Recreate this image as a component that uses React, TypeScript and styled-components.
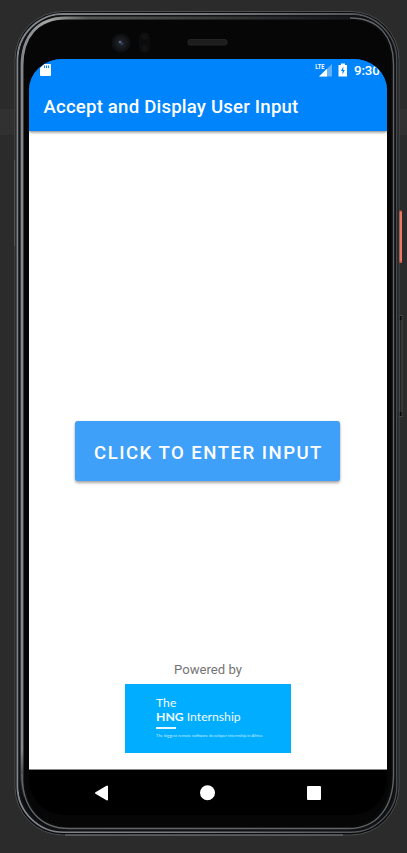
import React from "react";
import styled, { createGlobalStyle } from "styled-components";

const GlobalStyle = createGlobalStyle`
  * { box-sizing: border-box; }
  body { margin: 0; background: #2b2b2b; }
`;

const Desktop = styled.div`
  position: relative;
  width: 407px;
  height: 853px;
  padding: 11px 7px 17px 14px;
  overflow: hidden;
  background: linear-gradient(#2b2b2b 0 109px, #313131 109px 135px, #2b2b2b 135px);
`;

const Hardware = styled.svg`
  position: absolute;
  left: 0;
  top: 0;
`;

const Phone = styled.main`
  position: relative;
  display: flex;
  flex-direction: column;
  padding: 48px 6px 20px 15px;
  height: 825px;
  width: 379px;
`;

const Screen = styled.section`
  display: flex;
  flex-direction: column;
  width: 358px;
  height: 756px;
  overflow: hidden;
  border-radius: 34px 34px 36px 36px / 31px 31px 36px 36px;
  background: linear-gradient(#0084fb 0 72px, #fff 72px 711px, #000 711px);
  font-family: Roboto, sans-serif;
`;

const Header = styled.header`
  height: 72px;
  flex: none;
  background: #0084fb;
  color: #fff;
  box-shadow: 0 1px 3px rgba(0, 0, 0, 0.55);
`;

const StatusBar = styled.div`
  display: flex;
  align-items: center;
  height: 22px;
  padding: 0 7px 0 11px;
`;

const Spacer = styled.span`
  flex: 1;
`;

const Clock = styled.span`
  margin-left: 6px;
  width: 26px;
  font-size: 13.3px;
  font-weight: 500;
  line-height: 23px;
  letter-spacing: -0.15px;
  white-space: nowrap;
`;

const Title = styled.h1`
  margin: 0;
  padding: 14px 0 0 14.5px;
  font-size: 18.6px;
  line-height: 24px;
  font-weight: 500;
  letter-spacing: 0.2px;
  white-space: nowrap;
`;

const Content = styled.div`
  display: flex;
  flex: 1;
  flex-direction: column;
  align-items: center;
  padding-top: 290px;
`;

const InputButton = styled.button`
  width: 265px;
  height: 60px;
  margin-left: -1px;
  padding: 3px 0 0 2px;
  border: 0;
  border-radius: 3px;
  background: #3fa0fa;
  color: #fff;
  box-shadow: 0 2px 3px rgba(0, 0, 0, 0.35), 0 0 1px rgba(0, 0, 0, 0.2);
  font: 500 18.6px/24px Roboto, sans-serif;
  letter-spacing: 1.47px;
  white-space: nowrap;
`;

const Credit = styled.p`
  margin: 181px 0 0;
  color: #747474;
  font-size: 13.1px;
  line-height: 16px;
  white-space: nowrap;
`;

const Banner = styled.div`
  width: 166px;
  height: 69px;
  margin-top: 6px;
  padding: 12px 0 0 31px;
  background: #00adff;
  color: #f4fbff;
  font: 12.2px/14px Lato, sans-serif;
  white-space: nowrap;
`;

const Rule = styled.div`
  width: 20px;
  height: 1.5px;
  margin: 3px 0 4.5px;
  background: #e5f7ff;
`;

const Tagline = styled.div`
  color: #c9efff;
  font-size: 4.15px;
  line-height: 6px;
`;

const NavBar = styled.nav`
  display: flex;
  flex: none;
  height: 46px;
  margin-top: -1px;
  padding-left: 65px;
  gap: 90px;
  align-items: center;
  background: #000;
  border-top: 1px solid #888;
`;

function PhoneHardware() {
  return (
    <Hardware width="407" height="853" viewBox="0 0 407 853" fill="none">
      <defs>
        <linearGradient id="rim" x1="0" y1="0" x2="1" y2="0">
          <stop offset="0" stopColor="#83868a" />
          <stop offset=".5" stopColor="#77797b" />
          <stop offset="1" stopColor="#4b4d50" />
        </linearGradient>
        <linearGradient id="inner" x1="22" y1="0" x2="350" y2="0" gradientUnits="userSpaceOnUse">
          <stop offset="0" stopColor="#84868a" />
          <stop offset=".08" stopColor="#a5a7a5" />
          <stop offset=".2" stopColor="#555755" />
          <stop offset="1" stopColor="#17191b" />
        </linearGradient>
        <linearGradient id="leftFade" x1="0" y1="750" x2="0" y2="790" gradientUnits="userSpaceOnUse">
          <stop offset="0" stopColor="#84868a" />
          <stop offset="1" stopColor="#25272a" />
        </linearGradient>
        <radialGradient id="lens">
          <stop offset="0" stopColor="#292e42" />
          <stop offset=".4" stopColor="#181a20" />
          <stop offset="1" stopColor="#0c0d0f" />
        </radialGradient>
      </defs>
      <rect x="399" y="211" width="3" height="52" rx="1" fill="#ed7866" />
      <path d="M399 211h3M399 262h3" stroke="#c9422f" />
      <rect x="399.5" y="315.5" width="2.5" height="101" fill="#222426" stroke="#45474a" />
      <path d="M400.5 316v4M400.5 412v4" stroke="#08090a" strokeWidth="2" />
      <path d="M14.5 160v86" stroke="#56585a" />
      <rect x="15" y="11.5" width="384" height="823.5" rx="48" fill="#0a0b0c" stroke="#4c4e50" />
      <rect x="17.5" y="14" width="379" height="818" rx="46" stroke="url(#rim)" strokeWidth="2" />
      <rect x="19.8" y="16.3" width="375" height="814" rx="44" stroke="#101215" strokeWidth="2.5" />
      <path d="M22 750V66C22 37 37 18 66 18h284" stroke="url(#inner)" strokeWidth="2.8" />
      <path d="M20.6 750h2.8v30q0 8 2 16l-2 1q-2.8-9-2.8-17Z" fill="url(#leftFade)" />
      <path d="M350 18c29 0 43.5 19 43.5 46v710c0 33-16 54.5-45 54.5H69c-29 0-47-20-47-54.5" stroke="#626466" strokeWidth="1.4" />
      <path d="M65 835h278" stroke="#777" />
      <path d="M24 770V66c0-29 17-46 42-46h283c26 0 42 17 42 46v704c0 36-18 57-44 57H69c-27 0-45-21-45-57Z" fill="#060607" />
      <circle cx="121" cy="43" r="9.5" fill="url(#lens)" />
      <circle cx="121" cy="43" r="5" stroke="#1b1d21" />
      <circle cx="120" cy="42" r="1.3" fill="#606477" />
      <circle cx="122" cy="44" r="1" fill="#354575" />
      <rect x="140" y="33" width="9" height="19" rx="4" fill="#0a0b0c" stroke="#101112" />
      <circle cx="144.5" cy="37" r="3" fill="#111213" />
      <circle cx="144.5" cy="48" r="3" fill="#111213" />
      <rect x="188" y="39.5" width="39" height="5.5" rx="2" fill="#1d1d1e" stroke="#242425" />
    </Hardware>
  );
}

function StorageIcon() {
  return (
    <svg width="12" height="14" viewBox="0 0 12 14">
      <path fill="#fff" d="M4 1h6q1 0 1 1v10q0 1-1 1H1q-1 0-1-1V5Z" />
      <path d="M4.5 2.5V5M6.5 2.5V5M8.5 2.5V5" stroke="#0084fb" />
    </svg>
  );
}

const Lte = styled.text`
  font: 700 7px Roboto, sans-serif;
`;

function SignalIcon() {
  return (
    <svg width="18" height="15" viewBox="0 0 18 15">
      <path d="M17 1v12.5H4Z" fill="#62b3fd" />
      <path d="M12 5.8v7.7H4Z" fill="#fff" />
      <Lte x="0.3" y="6.2" fill="#fff" textLength="9" lengthAdjust="spacingAndGlyphs">LTE</Lte>
    </svg>
  );
}

const BatterySvg = styled.svg`
  margin-left: 5px;
`;

function BatteryIcon() {
  return (
    <BatterySvg width="10" height="14" viewBox="0 0 10 14">
      <path fill="#fff" d="M3 .5h4V2h2v11.5H.5V2H3Z" />
      <path d="M5.3 3.5 3 8h1.5v3.5L6.8 7H5.3Z" fill="#0084fb" />
    </BatterySvg>
  );
}

export default function App() {
  return (
    <>
      <GlobalStyle />
      <Desktop>
        <PhoneHardware />
        <Phone>
          <Screen>
            <Header>
              <StatusBar>
                <StorageIcon />
                <Spacer />
                <SignalIcon />
                <BatteryIcon />
                <Clock>9:30</Clock>
              </StatusBar>
              <Title>Accept and Display User Input</Title>
            </Header>
            <Content>
              <InputButton>CLICK TO ENTER INPUT</InputButton>
              <Credit>Powered by</Credit>
              <Banner>
                <div>The</div>
                <div><b>HNG</b> Internship</div>
                <Rule />
                <Tagline>The biggest remote software developer internship in Africa</Tagline>
              </Banner>
            </Content>
            <NavBar>
              <svg width="16" height="18" viewBox="0 0 16 18">
                <path d="M2 9 13 2.5v13Z" fill="#fff" stroke="#fff" strokeWidth="2" strokeLinejoin="round" />
              </svg>
              <svg width="16" height="16" viewBox="0 0 16 16"><circle cx="7.5" cy="7.7" r="7.5" fill="#fff" /></svg>
              <svg width="16" height="16" viewBox="0 0 16 16"><rect x="1" y="1" width="14" height="14" rx="1" fill="#fff" /></svg>
            </NavBar>
          </Screen>
        </Phone>
      </Desktop>
    </>
  );
}
